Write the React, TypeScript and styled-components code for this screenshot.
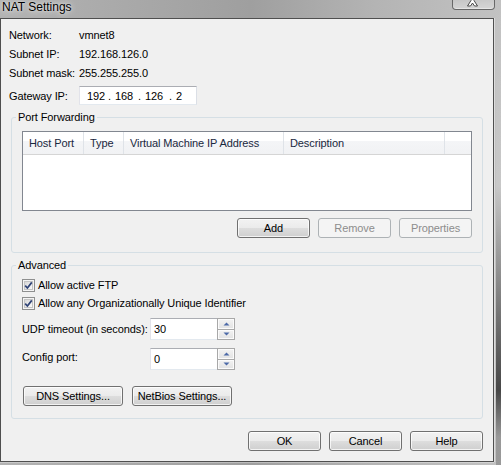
import styled, { createGlobalStyle } from 'styled-components'

const GlobalStyle = createGlobalStyle`
  html, body {
    margin: 0;
    padding: 0;
  }
  body {
    font-family: "Liberation Sans", Arial, sans-serif;
    font-size: 11px;
    letter-spacing: -0.1px;
    color: #000;
    background: #a9a9a9;
  }
`

const columns = [
  { title: 'Host Port', width: 61 },
  { title: 'Type', width: 40 },
  { title: 'Virtual Machine IP Address', width: 160 },
  { title: 'Description', width: 161 },
]

export default function App() {
  return (
    <>
      <GlobalStyle />
      <Window>
        <TitleBar>
          <Title>NAT Settings</Title>
          <CloseButton aria-label="Close">
            <svg width="43" height="10" viewBox="0 0 43 10">
              <path
                d="M16.5 -5 L19.5 -5 L21.5 -2 L23.5 -5 L26.5 -5 L23 0.5 L26.5 6 L23.5 6 L21.5 3 L19.5 6 L16.5 6 L20 0.5 Z"
                fill="#fff"
                stroke="#3a3a3a"
                strokeWidth="0.9"
                strokeLinejoin="round"
              />
            </svg>
          </CloseButton>
        </TitleBar>

        <Client>
          <InfoRow>
            <InfoLabel>Network:</InfoLabel>
            <span>vmnet8</span>
          </InfoRow>
          <InfoRow>
            <InfoLabel>Subnet IP:</InfoLabel>
            <span>192.168.126.0</span>
          </InfoRow>
          <InfoRow>
            <InfoLabel>Subnet mask:</InfoLabel>
            <span>255.255.255.0</span>
          </InfoRow>
          <GatewayRow>
            <InfoLabel>Gateway IP:</InfoLabel>
            <IpBox>
              <Octet $w={21}>192</Octet>
              <Dot>.</Dot>
              <Octet $w={23}>168</Octet>
              <Dot>.</Dot>
              <Octet $w={24}>126</Octet>
              <Dot>.</Dot>
              <Octet $w={20}>2</Octet>
            </IpBox>
          </GatewayRow>

          <GroupBox>
            <Legend>Port Forwarding</Legend>
            <GroupBody $top={7} $bottom={14}>
              <ListView>
                <HeaderRow>
                  {columns.map(c => (
                    <HeaderCell key={c.title} $w={c.width}>
                      {c.title}
                    </HeaderCell>
                  ))}
                  <HeaderFiller />
                </HeaderRow>
              </ListView>
              <ButtonRow $top={7}>
                <Button $w={73}>Add</Button>
                <Button $w={73} disabled>
                  Remove
                </Button>
                <Button $w={73} disabled>
                  Properties
                </Button>
              </ButtonRow>
            </GroupBody>
          </GroupBox>

          <GroupBox>
            <Legend>Advanced</Legend>
            <GroupBody $top={4} $bottom={12}>
              <CheckRow>
                <CheckBox checked />
                <span>Allow active FTP</span>
              </CheckRow>
              <CheckRow>
                <CheckBox checked />
                <span>Allow any Organizationally Unique Identifier</span>
              </CheckRow>
              <SpinRow $top={6}>
                <SpinLabel $offset={5}>UDP timeout (in seconds):</SpinLabel>
                <Spinner value="30" />
              </SpinRow>
              <SpinRow $top={8}>
                <SpinLabel $offset={3}>Config port:</SpinLabel>
                <Spinner value="0" />
              </SpinRow>
              <ButtonRow $top={16} $start>
                <Button $w={100}>DNS Settings...</Button>
                <Button $w={100}>NetBios Settings...</Button>
              </ButtonRow>
            </GroupBody>
          </GroupBox>

          <ButtonRow $top={12}>
            <Button $w={73}>OK</Button>
            <Button $w={73}>Cancel</Button>
            <Button $w={73}>Help</Button>
          </ButtonRow>
        </Client>
      </Window>
    </>
  )
}

function CheckBox({ checked }: { checked: boolean }) {
  return (
    <CheckFrame>
      <CheckInner>
        {checked && (
          <svg width="9" height="9" viewBox="0 0 9 9">
            <path
              d="M1.2 4.6 L3.4 7 L7.8 1.4"
              fill="none"
              stroke="#2f4376"
              strokeWidth="1.7"
            />
          </svg>
        )}
      </CheckInner>
    </CheckFrame>
  )
}

function Spinner({ value }: { value: string }) {
  return (
    <SpinBox>
      <SpinField>{value}</SpinField>
      <SpinButtons>
        <SpinButton>
          <svg width="7" height="4" viewBox="0 0 7 4">
            <path d="M0.5 3.5 L3.5 0.5 L6.5 3.5 Z" fill="#4d6aa8" />
          </svg>
        </SpinButton>
        <SpinButton>
          <svg width="7" height="4" viewBox="0 0 7 4">
            <path d="M0.5 0.5 L3.5 3.5 L6.5 0.5 Z" fill="#4d6aa8" />
          </svg>
        </SpinButton>
      </SpinButtons>
    </SpinBox>
  )
}

const Window = styled.div`
  width: 501px;
  height: 465px;
  display: flex;
  flex-direction: column;
  overflow: hidden;
  background:
    linear-gradient(
        180deg,
        rgba(255, 255, 255, 0) 0%,
        rgba(255, 255, 255, 0.1) 40%,
        rgba(30, 30, 30, 0.55) 72%,
        rgba(30, 30, 30, 0.75) 84%,
        rgba(60, 60, 60, 0.3) 94%
      )
      right top / 5px 100% no-repeat,
    linear-gradient(
      90deg,
      #b3b3b3 0%,
      #a9a9a9 25%,
      #9f9f9f 50%,
      #b4b4b4 75%,
      #c2c2c2 100%
    );
`

const TitleBar = styled.header`
  height: 18px;
  flex: none;
  display: flex;
  justify-content: space-between;
  align-items: flex-start;
  padding: 0 6px 0 2px;
`

const Title = styled.span`
  font-size: 12px;
  line-height: 15px;
  letter-spacing: 0;
  color: #000;
  text-shadow: 0 0 6px rgba(255, 255, 255, 0.9), 0 0 2px rgba(255, 255, 255, 0.6);
`

const CloseButton = styled.div`
  width: 43px;
  height: 10px;
  box-sizing: border-box;
  border: 1px solid rgba(70, 70, 70, 0.75);
  border-top: none;
  border-radius: 0 0 4px 4px;
  background: linear-gradient(180deg, rgba(255, 255, 255, 0.15), rgba(255, 255, 255, 0.35));
  box-shadow: inset 0 -1px 0 rgba(255, 255, 255, 0.4);
  overflow: hidden;
  display: flex;
  justify-content: center;

  svg {
    display: block;
    margin-left: -2px;
  }
`

const Client = styled.main`
  width: 494px;
  height: 444px;
  flex: none;
  box-sizing: border-box;
  display: flex;
  flex-direction: column;
  padding: 7px 10px 0 8px;
  background: #f0f0f0;
  border: 1px solid #4f4f4f;
  box-shadow: 1px 0 0 rgba(255, 255, 255, 0.45), 0 1px 0 rgba(255, 255, 255, 0.3);
`

const InfoRow = styled.div`
  display: flex;
  height: 19px;
  line-height: 19px;
  white-space: nowrap;
`

const InfoLabel = styled.span`
  width: 70px;
  flex: none;
`

const GatewayRow = styled.div`
  display: flex;
  align-items: center;
  height: 19px;
  margin-top: 3px;
`

const IpBox = styled.div`
  width: 118px;
  height: 19px;
  box-sizing: border-box;
  display: flex;
  align-items: center;
  padding-left: 7px;
  background: #fff;
  border: 1px solid;
  border-color: #abadb3 #dbdfe6 #e3e9ef #e2e3ea;
`

const Octet = styled.span<{ $w: number }>`
  width: ${p => p.$w}px;
  flex: none;
`

const Dot = styled.span`
  width: 7px;
  flex: none;
`

const GroupBox = styled.fieldset`
  margin: 5px 0 0 2px;
  padding: 0;
  min-width: 0;
  border: 1px solid #d5dfe5;
  border-radius: 3px;
`

const Legend = styled.legend`
  margin-left: 4px;
  padding: 0 2px;
  line-height: 14px;
  font-size: 11px;
`

const GroupBody = styled.div<{ $top: number; $bottom: number }>`
  display: flex;
  flex-direction: column;
  padding: ${p => p.$top}px 10px ${p => p.$bottom}px;
`

const ListView = styled.div`
  height: 80px;
  box-sizing: border-box;
  background: #fff;
  border: 1px solid #828790;
`

const HeaderRow = styled.div`
  display: flex;
  height: 23px;
  box-sizing: border-box;
  border-bottom: 1px solid #d5d5d5;
  background: linear-gradient(180deg, #ffffff 0%, #ffffff 42%, #f4f5f7 43%, #f1f2f4 100%);
`

const HeaderCell = styled.div<{ $w: number }>`
  width: ${p => p.$w}px;
  flex: none;
  box-sizing: border-box;
  padding-left: 6px;
  line-height: 22px;
  color: #1a2840;
  white-space: nowrap;
  border-right: 1px solid #dfe3e8;
`

const HeaderFiller = styled.div`
  flex: 1;
`

const ButtonRow = styled.div<{ $top: number; $start?: boolean }>`
  display: flex;
  justify-content: ${p => (p.$start ? 'flex-start' : 'flex-end')};
  gap: ${p => (p.$start ? 9 : 8)}px;
  margin-top: ${p => p.$top}px;
  padding-left: ${p => (p.$start ? 1 : 0)}px;
`

const Button = styled.button<{ $w: number }>`
  width: ${p => p.$w}px;
  height: 20px;
  flex: none;
  padding: 0;
  box-sizing: border-box;
  font-family: "Liberation Sans", Arial, sans-serif;
  font-size: 11px;
  letter-spacing: -0.1px;
  line-height: 18px;
  color: #000;
  border: 1px solid #707070;
  border-radius: 3px;
  background: linear-gradient(180deg, #f2f2f2 0%, #ebebeb 48%, #dddddd 52%, #cfcfcf 100%);
  box-shadow: inset 0 0 0 1px rgba(255, 255, 255, 0.75);

  &:disabled {
    color: #8d8d8d;
    border-color: #adb2b5;
    background: #f4f4f4;
    box-shadow: none;
  }
`

const CheckRow = styled.label`
  display: flex;
  align-items: center;
  gap: 3px;
  height: 18px;
  white-space: nowrap;
`

const CheckFrame = styled.span`
  width: 13px;
  height: 13px;
  flex: none;
  box-sizing: border-box;
  border: 1px solid #8e8f8f;
  background: #f4f4f4;
  display: flex;
  align-items: center;
  justify-content: center;
`

const CheckInner = styled.span`
  width: 9px;
  height: 9px;
  background: linear-gradient(135deg, #d8d8d8 0%, #e9e9e9 50%, #fbfbfb 100%);
  border: 1px solid #c4c4c4;
  box-sizing: border-box;
  display: flex;
  align-items: center;
  justify-content: center;
  overflow: visible;

  svg {
    flex: none;
  }
`

const SpinRow = styled.div<{ $top: number }>`
  display: flex;
  align-items: flex-start;
  margin-top: ${p => p.$top}px;
`

const SpinLabel = styled.span<{ $offset: number }>`
  width: 128px;
  flex: none;
  margin-top: ${p => p.$offset}px;
  line-height: 13px;
  white-space: nowrap;
`

const SpinBox = styled.div`
  display: flex;
  width: 85px;
  height: 22px;
`

const SpinField = styled.div`
  flex: 1;
  box-sizing: border-box;
  padding: 4px 0 0 3px;
  line-height: 13px;
  background: #fff;
  border: 1px solid;
  border-color: #abadb3 transparent #e3e9ef #e2e3ea;
  border-right: none;
`

const SpinButtons = styled.div`
  width: 18px;
  flex: none;
  box-sizing: border-box;
  display: flex;
  flex-direction: column;
  gap: 1px;
  padding: 1px;
  background: #a8a8a8;
`

const SpinButton = styled.div`
  flex: 1;
  box-sizing: border-box;
  display: flex;
  align-items: center;
  justify-content: center;
  border: 1px solid #fbfbfb;
  background: linear-gradient(180deg, #f1f1f1, #e4e4e4);
`
